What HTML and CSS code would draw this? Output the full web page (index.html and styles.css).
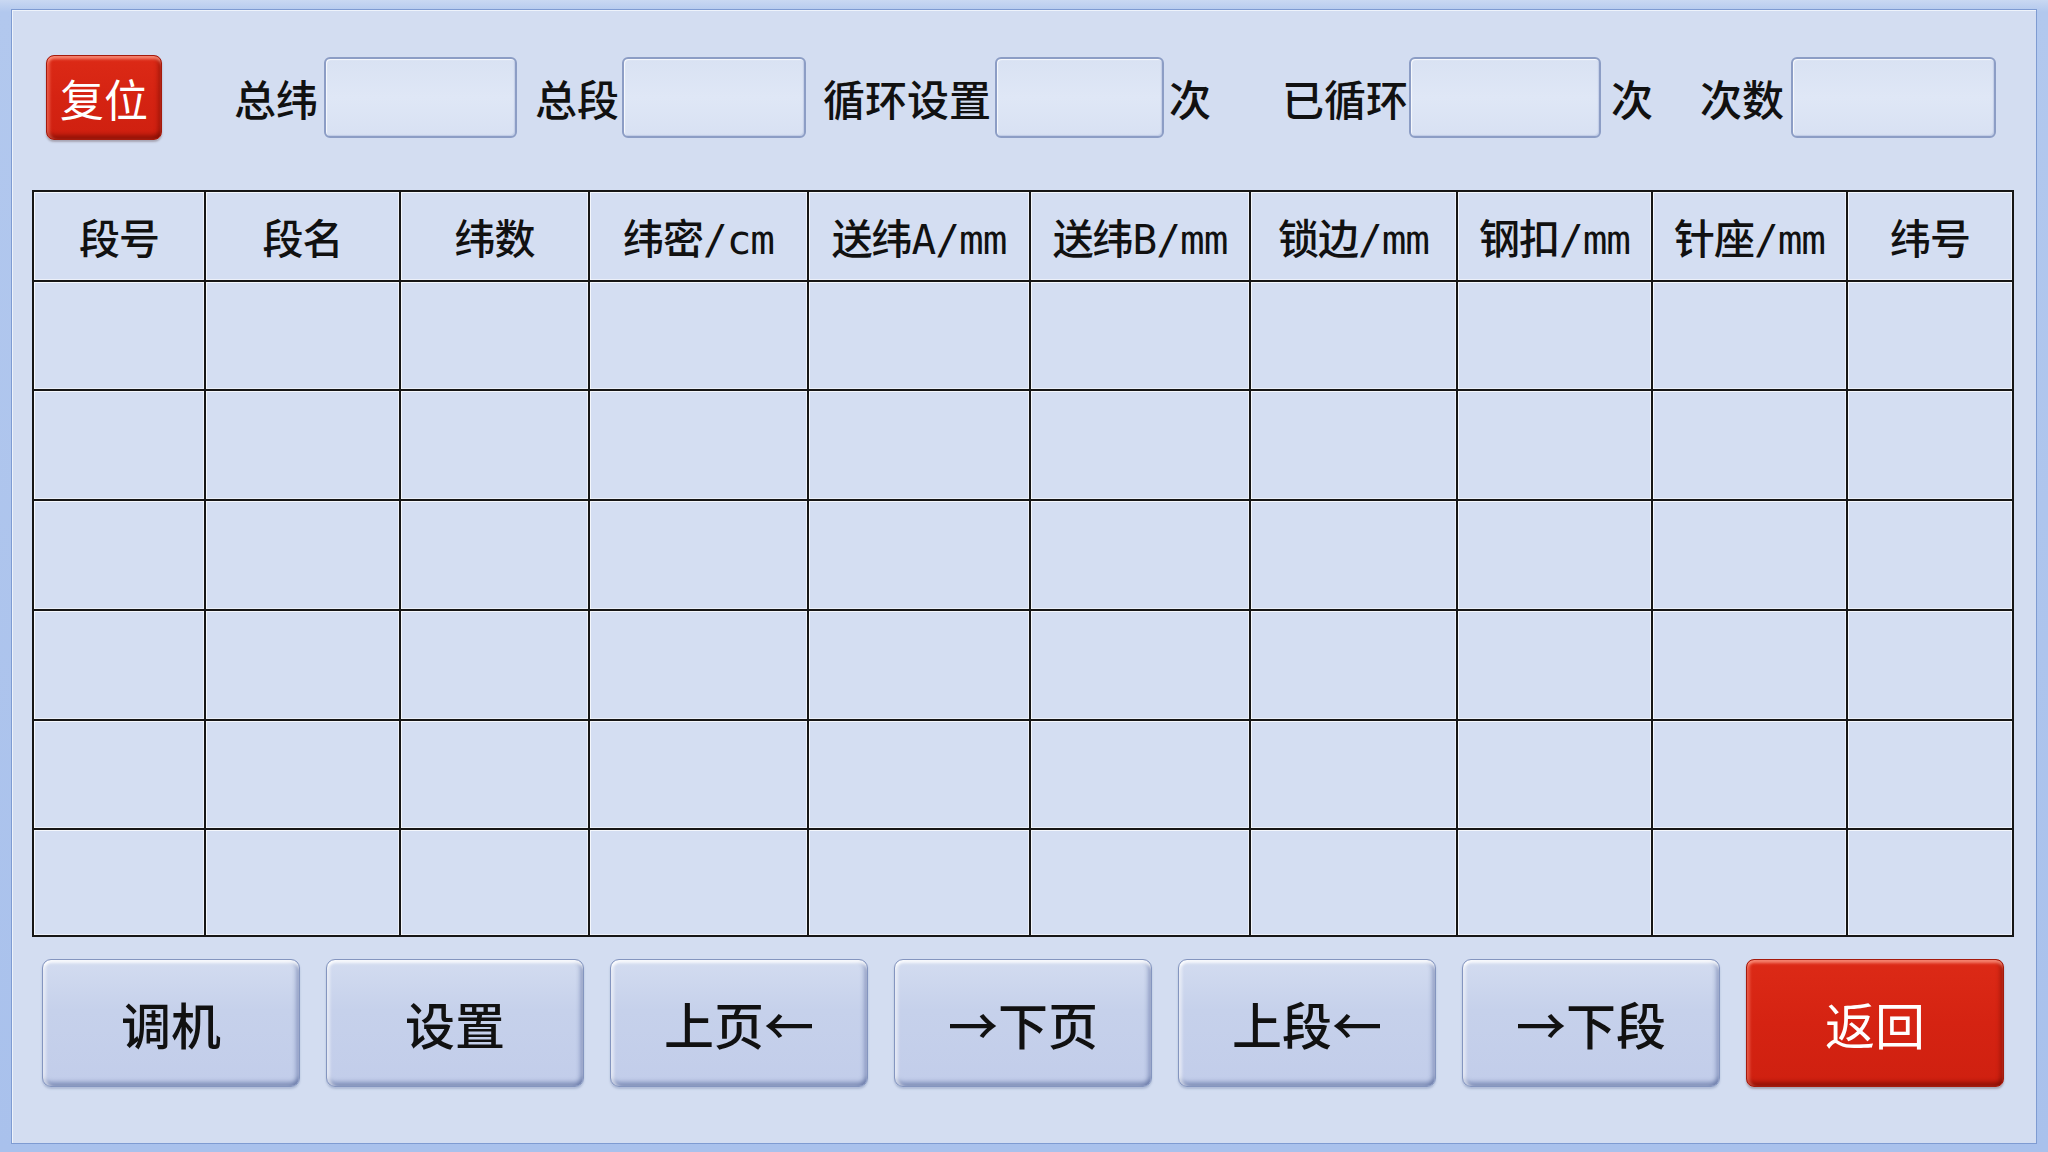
FILE: index.html
```html
<!DOCTYPE html>
<html lang="zh-CN">
<head>
<meta charset="utf-8">
<title>段设置</title>
<link rel="stylesheet" href="styles.css">
</head>
<body>
<div class="screen">
  <div class="panel">
    <div class="topbar">
      <button class="btn-red reset">复位</button>
      <span class="lbl l1">总纬</span><div class="field f1"></div>
      <span class="lbl l2">总段</span><div class="field f2"></div>
      <span class="lbl l3">循环设置</span><div class="field f3"></div>
      <span class="lbl l4">次</span>
      <span class="lbl l5">已循环</span><div class="field f4"></div>
      <span class="lbl l6">次</span>
      <span class="lbl l7">次数</span><div class="field f5"></div>
    </div>

    <div class="grid">
      <div class="th">段号</div>
      <div class="th">段名</div>
      <div class="th">纬数</div>
      <div class="th">纬密/cm</div>
      <div class="th">送纬A/mm</div>
      <div class="th">送纬B/mm</div>
      <div class="th">锁边/mm</div>
      <div class="th">钢扣/mm</div>
      <div class="th">针座/mm</div>
      <div class="th">纬号</div>

      <div class="td"></div><div class="td"></div><div class="td"></div><div class="td"></div><div class="td"></div><div class="td"></div><div class="td"></div><div class="td"></div><div class="td"></div><div class="td"></div>
      <div class="td"></div><div class="td"></div><div class="td"></div><div class="td"></div><div class="td"></div><div class="td"></div><div class="td"></div><div class="td"></div><div class="td"></div><div class="td"></div>
      <div class="td"></div><div class="td"></div><div class="td"></div><div class="td"></div><div class="td"></div><div class="td"></div><div class="td"></div><div class="td"></div><div class="td"></div><div class="td"></div>
      <div class="td"></div><div class="td"></div><div class="td"></div><div class="td"></div><div class="td"></div><div class="td"></div><div class="td"></div><div class="td"></div><div class="td"></div><div class="td"></div>
      <div class="td"></div><div class="td"></div><div class="td"></div><div class="td"></div><div class="td"></div><div class="td"></div><div class="td"></div><div class="td"></div><div class="td"></div><div class="td"></div>
      <div class="td"></div><div class="td"></div><div class="td"></div><div class="td"></div><div class="td"></div><div class="td"></div><div class="td"></div><div class="td"></div><div class="td"></div><div class="td"></div>
    </div>

    <div class="actions">
      <button class="btn">调机</button>
      <button class="btn">设置</button>
      <button class="btn">上页←</button>
      <button class="btn">→下页</button>
      <button class="btn">上段←</button>
      <button class="btn">→下段</button>
      <button class="btn-red back">返回</button>
    </div>
  </div>
</div>
</body>
</html>
```

FILE: styles.css
```css
html, body {
  margin: 0;
  padding: 0;
}

body {
  width: 2048px;
  height: 1152px;
  overflow: hidden;
  background: linear-gradient(180deg, #c9d8f2 0px, #b2c8ee 12px, #a9c1ec 100%);
  font-family: "Noto Sans CJK SC", "Noto Sans", sans-serif;
  color: #111;
}

.screen {
  padding: 9px 11px 8px 11px;
  height: 1152px;
  box-sizing: border-box;
}

.panel {
  height: 100%;
  box-sizing: border-box;
  border: 1px solid #7e9bd2;
  box-shadow: inset 1px 1px 0 #eef3fb;
  background: #d3ddf1;
  padding: 45px 0 0 20px;
}

/* ---------- top bar ---------- */
.topbar {
  display: flex;
  align-items: center;
  height: 85px;
}

.lbl {
  font-size: 42px;
  font-weight: 500;
  line-height: 1;
  white-space: nowrap;
  flex: none;
}

.field {
  height: 81px;
  box-sizing: border-box;
  flex: none;
  border: 2px solid #8c9dc5;
  border-radius: 6px;
  background: linear-gradient(180deg, #d9e2f3, #dfe7f6 50%, #d8e1f3);
  box-shadow: inset 1px 1px 1px rgba(255,255,255,.8), inset -1px -1px 1px rgba(120,140,190,.25);
}

.reset {
  margin-left: 14px;
  width: 116px;
  height: 85px;
  font-size: 44px;
}

.l1 { margin-left: 72px; }
.f1 { margin-left: 6px; width: 193px; }
.l2 { margin-left: 18px; }
.f2 { margin-left: 3px; width: 184px; }
.l3 { margin-left: 17px; }
.f3 { margin-left: 4px; width: 169px; }
.l4 { margin-left: 5px; }
.l5 { margin-left: 71px; }
.f4 { margin-left: 1px; width: 192px; }
.l6 { margin-left: 10px; }
.l7 { margin-left: 47px; }
.f5 { margin-left: 7px; width: 205px; }

/* ---------- table ---------- */
.grid {
  margin-top: 50px;
  display: grid;
  grid-template-columns: 172px 195px 189px 219px 222px 220px 207px 195px 195px 166px;
  grid-template-rows: 90px 109px 110px 110px 110px 109px 107px;
  width: max-content;
  border-left: 2px solid #161616;
  border-top: 2px solid #161616;
}

.th, .td {
  border-right: 2px solid #161616;
  border-bottom: 2px solid #161616;
  box-shadow: inset 1px 1px 0 rgba(255,255,255,.75), inset -1px -1px 0 rgba(255,255,255,.55);
  background: #d4def2;
}

.th {
  display: flex;
  align-items: center;
  justify-content: center;
  font-family: "DejaVu Sans Mono", "Noto Sans CJK SC", monospace;
  font-size: 41px;
  font-weight: 500;
  letter-spacing: -1px;
  white-space: nowrap;
}

/* ---------- bottom buttons ---------- */
.actions {
  display: flex;
  gap: 26px;
  margin-top: 22px;
  margin-left: 10px;
}

button {
  font-family: "Noto Sans CJK SC", "Noto Sans", sans-serif;
  margin: 0;
  padding: 0;
  cursor: pointer;
}

.btn, .back {
  width: 258px;
  height: 128px;
  font-size: 50px;
  font-weight: 500;
}

.btn {
  color: #111;
  border: 1px solid #8495bf;
  border-radius: 9px;
  background: linear-gradient(180deg, #d3dcf0 0%, #c6d1eb 40%, #c2cdea 100%);
  box-shadow:
    inset 0 4px 3px -1px rgba(255,255,255,.85),
    inset 4px 0 3px -1px rgba(255,255,255,.55),
    inset 0 -6px 4px -2px rgba(80,98,150,.55),
    inset -5px 0 4px -2px rgba(80,98,150,.45),
    0 2px 2px rgba(70,90,140,.25);
}

.btn-red {
  color: #fff;
  border: 1px solid #a51a0c;
  border-radius: 8px;
  background: linear-gradient(180deg, #dc2a16 0%, #d52312 50%, #cf2010 100%);
  box-shadow:
    inset 0 4px 3px -1px rgba(255,160,140,.75),
    inset 4px 0 3px -1px rgba(255,140,120,.45),
    inset 0 -6px 4px -2px rgba(110,10,0,.6),
    inset -5px 0 4px -2px rgba(110,10,0,.45),
    0 2px 2px rgba(70,40,40,.3);
  font-weight: 400;
}

.back {
  font-weight: 400;
}
```
